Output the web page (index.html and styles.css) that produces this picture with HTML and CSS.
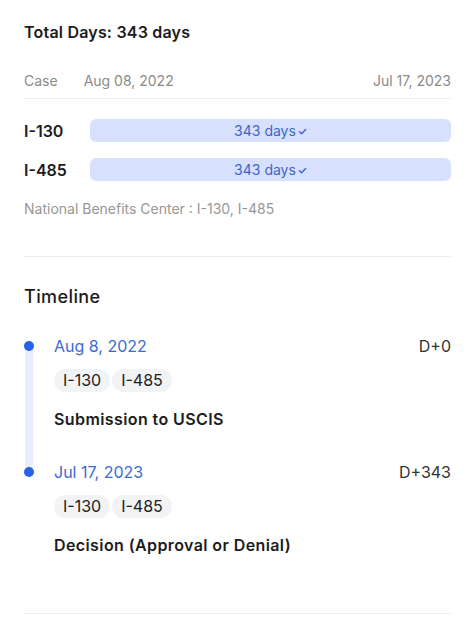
FILE: index.html
```html
<!DOCTYPE html>
<html lang="en">
<head>
    <meta charset="UTF-8">
    <meta name="viewport" content="width=device-width, initial-scale=1.0">
    <link rel="stylesheet" href="styles.css">
    <title>Case Timeline</title>
</head>
<body>
    <div class="page">
        <section class="summary">
            <h1 class="total">Total Days: 343 days</h1>

            <div class="case-row">
                <span class="case-label">Case</span>
                <span class="case-start">Aug 08, 2022</span>
                <span class="case-end">Jul 17, 2023</span>
            </div>

            <div class="forms">
                <div class="form-row">
                    <span class="form-name">I-130</span>
                    <div class="form-bar">343 days<svg class="check" viewBox="0 0 10 10"><path d="M1.5 5.2 L4 7.5 L8.5 2.8" /></svg></div>
                </div>
                <div class="form-row">
                    <span class="form-name">I-485</span>
                    <div class="form-bar">343 days<svg class="check" viewBox="0 0 10 10"><path d="M1.5 5.2 L4 7.5 L8.5 2.8" /></svg></div>
                </div>
            </div>

            <p class="note">National Benefits Center : I-130, I-485</p>
        </section>

        <section class="timeline">
            <h2>Timeline</h2>

            <div class="event">
                <div class="rail">
                    <span class="dot"></span>
                    <span class="line"></span>
                </div>
                <div class="event-body">
                    <div class="event-head">
                        <span class="event-date">Aug 8, 2022</span>
                        <span class="event-day">D+0</span>
                    </div>
                    <div class="tags">
                        <span class="tag">I-130</span>
                        <span class="tag">I-485</span>
                    </div>
                    <div class="event-title">Submission to USCIS</div>
                </div>
            </div>

            <div class="event last">
                <div class="rail">
                    <span class="dot"></span>
                </div>
                <div class="event-body">
                    <div class="event-head">
                        <span class="event-date">Jul 17, 2023</span>
                        <span class="event-day">D+343</span>
                    </div>
                    <div class="tags">
                        <span class="tag">I-130</span>
                        <span class="tag">I-485</span>
                    </div>
                    <div class="event-title">Decision (Approval or Denial)</div>
                </div>
            </div>
        </section>
    </div>
</body>
</html>
```

FILE: styles.css
```css
body {
    font-family: Inter, 'Noto Sans', sans-serif;
    margin: 0;
    padding: 0;
    background-color: #fff;
    color: #1c1c1c;
}

.page {
    padding: 0 23px 0 24px;
}

.total {
    margin: 22px 0 0;
    font-size: 16px;
    line-height: 20px;
    font-weight: 600;
    letter-spacing: 0.2px;
}

.case-row {
    display: flex;
    margin-top: 29px;
    padding-bottom: 7px;
    border-bottom: 1px solid #ededed;
    font-size: 14px;
    line-height: 20px;
    color: #8a8a8a;
}

.case-start {
    margin-left: 26px;
}

.case-end {
    margin-left: auto;
}

.forms {
    display: flex;
    flex-direction: column;
    gap: 16px;
    margin-top: 20px;
}

.form-row {
    display: flex;
    align-items: center;
}

.form-name {
    width: 66px;
    font-size: 16px;
    font-weight: 600;
}

.form-bar {
    flex: 1;
    display: flex;
    justify-content: center;
    align-items: center;
    height: 23px;
    border-radius: 6px;
    background-color: #d7e0fd;
    color: #3f66c6;
    font-size: 14px;
}

.check {
    width: 9px;
    height: 9px;
    margin-left: 2px;
    margin-top: 2px;
}

.check path {
    fill: none;
    stroke: #3f66c6;
    stroke-width: 1.6;
    stroke-linecap: round;
    stroke-linejoin: round;
}

.note {
    margin: 18px 0 0;
    font-size: 14px;
    line-height: 20px;
    color: #979797;
}

.timeline {
    margin-top: 37px;
    padding-bottom: 58px;
    border-top: 1px solid #ededed;
    border-bottom: 1px solid #ededed;
}

.timeline h2 {
    margin: 28px 0 26px;
    font-size: 18px;
    line-height: 24px;
    font-weight: 500;
    letter-spacing: 0.4px;
}

.event {
    display: flex;
}

.rail {
    display: flex;
    flex-direction: column;
    align-items: center;
    width: 10px;
    margin-right: 20px;
    padding-top: 6px;
}

.dot {
    width: 10px;
    height: 10px;
    border-radius: 50%;
    background-color: #2563eb;
    position: relative;
    z-index: 1;
}

.line {
    flex: 1;
    width: 8px;
    margin-top: -5px;
    margin-bottom: -7px;
    background-color: #e8eefc;
}

.event-body {
    flex: 1;
    padding-bottom: 32px;
}

.event.last .event-body {
    padding-bottom: 0;
}

.event-head {
    display: flex;
    justify-content: space-between;
    font-size: 16px;
    line-height: 22px;
}

.event-date {
    color: #3a6bd4;
}

.event-day {
    color: #333;
}

.tags {
    display: flex;
    gap: 2px;
    margin-top: 12px;
}

.tag {
    height: 23px;
    line-height: 23px;
    padding: 0 9px;
    border-radius: 12px;
    background-color: #f2f3f5;
    font-size: 16px;
    color: #222;
}

.event-title {
    margin-top: 17px;
    font-size: 16px;
    line-height: 20px;
    font-weight: 600;
    letter-spacing: 0.4px;
}
```
